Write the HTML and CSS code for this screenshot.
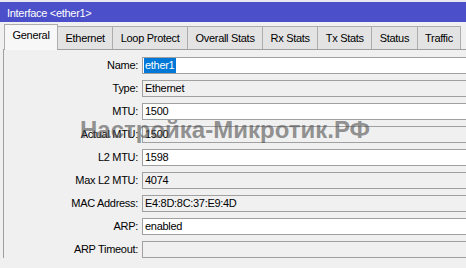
FILE: index.html
```html
<!DOCTYPE html>
<html>
<head>
<meta charset="utf-8">
<title>Interface &lt;ether1&gt;</title>
<link rel="stylesheet" href="styles.css">
</head>
<body>
<div class="window">
  <div class="titlebar">Interface &lt;ether1&gt;</div>
  <div class="tabs">
    <div class="tab active">General</div>
    <div class="tab">Ethernet</div>
    <div class="tab">Loop Protect</div>
    <div class="tab">Overall Stats</div>
    <div class="tab">Rx Stats</div>
    <div class="tab">Tx Stats</div>
    <div class="tab">Status</div>
    <div class="tab">Traffic</div>
  </div>
  <div class="panel">
    <div class="row"><div class="label">Name:</div><div class="field"><span class="sel">ether1</span></div></div>
    <div class="row"><div class="label">Type:</div><div class="field ro">Ethernet</div></div>
    <div class="row"><div class="label">MTU:</div><div class="field">1500</div></div>
    <div class="row"><div class="label">Actual MTU:</div><div class="field ro">1500</div></div>
    <div class="row"><div class="label">L2 MTU:</div><div class="field">1598</div></div>
    <div class="row"><div class="label">Max L2 MTU:</div><div class="field ro">4074</div></div>
    <div class="row"><div class="label">MAC Address:</div><div class="field ro">E4:8D:8C:37:E9:4D</div></div>
    <div class="row"><div class="label">ARP:</div><div class="field">enabled</div></div>
    <div class="row"><div class="label">ARP Timeout:</div><div class="field ro"></div></div>
  </div>
  <div class="watermark">Настройка-Микротик.РФ</div>
</div>
</body>
</html>
```
FILE: styles.css
```css
html, body {
  margin: 0;
  padding: 0;
}
body {
  background: #f0f0f0;
  font-family: "Liberation Sans", Arial, sans-serif;
  font-size: 11px;
  letter-spacing: -0.3px;
  color: #000;
  width: 466px;
  height: 268px;
  overflow: hidden;
}
.window {
  position: relative;
  height: 268px;
  overflow: hidden;
}
.titlebar {
  border-top: 2px solid #e8e8f0;
  height: 20px;
  line-height: 22px;
  background: #4b4fc9;
  color: #fff;
  padding-left: 7px;
  white-space: nowrap;
}
.tabs {
  display: flex;
  align-items: flex-end;
  height: 27px;
  padding-left: 4px;
}
.tab {
  height: 22px;
  line-height: 22px;
  padding: 0 7.5px;
  background: #e3e3e3;
  border: 1px solid #adadad;
  border-bottom: none;
  margin-left: -1px;
  white-space: nowrap;
}
.tab.active {
  height: 25px;
  line-height: 21px;
  background: #f7f7f7;
  margin-left: 0;
  margin-bottom: -1px;
  position: relative;
  z-index: 1;
}
.panel {
  margin-left: 3px;
  margin-right: -20px;
  border-top: 1px solid #a0a0a0;
  border-left: 1px solid #a0a0a0;
  padding-top: 7px;
  display: flex;
  flex-direction: column;
  gap: 6px;
}
.row {
  display: grid;
  grid-template-columns: 134px 1fr;
  column-gap: 4px;
}
.label {
  text-align: right;
  line-height: 17px;
  white-space: nowrap;
}
.field {
  height: 15px;
  line-height: 15px;
  border: 1px solid #a0a0a0;
  background: #fff;
  padding-left: 2px;
  white-space: nowrap;
}
.field.ro {
  background: #f0f0f0;
}
.sel {
  display: inline-block;
  background: #0078d7;
  color: #fff;
  line-height: 15px;
  padding: 0 2px 0 1px;
  margin-left: -1px;
}
.watermark {
  position: absolute;
  left: 80px;
  top: 118px;
  font-weight: bold;
  font-size: 24px;
  line-height: 24px;
  letter-spacing: 0;
  color: rgba(80, 80, 80, 0.62);
  white-space: nowrap;
  pointer-events: none;
}
```
